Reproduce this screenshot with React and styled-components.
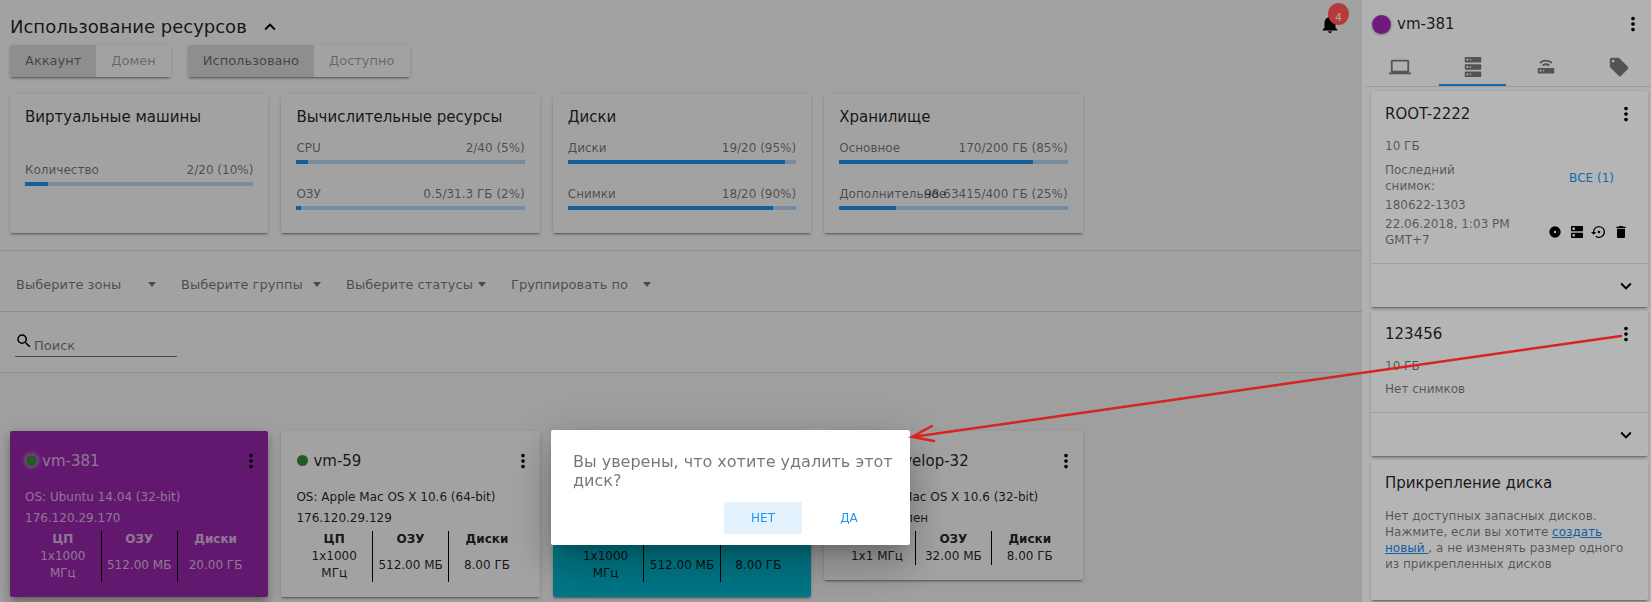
import React from "react";
import styled, { createGlobalStyle, css } from "styled-components";
import {
  MdDelete,
  MdDns,
  MdExpandLess,
  MdExpandMore,
  MdLaptop,
  MdLocalOffer,
  MdMoreVert,
  MdNotifications,
  MdSearch,
  MdSettingsBackupRestore,
} from "react-icons/md";

const GlobalStyle = createGlobalStyle`
  *, *::before, *::after { box-sizing: border-box; }
  body {
    margin: 0;
    background: #fafafa;
    color: rgba(0, 0, 0, 0.87);
    font: 12px/16px "DejaVu Sans", sans-serif;
  }
  h1, h2, h3, p { margin: 0; font-weight: 400; }
  button, input, select { font: inherit; color: inherit; }
`;

const shadow = "0 3px 1px -2px rgba(0,0,0,.2), 0 2px 2px 0 rgba(0,0,0,.14), 0 1px 5px 0 rgba(0,0,0,.12)";
const raised = "0 5px 5px -3px rgba(0,0,0,.2), 0 8px 10px 1px rgba(0,0,0,.14), 0 3px 14px 2px rgba(0,0,0,.12)";

const Page = styled.div`
  display: grid;
  grid-template-columns: minmax(0, 1fr) 289px;
  min-height: 100vh;
`;

const Main = styled.main`
  position: relative;
  min-width: 0;
`;

const DrawerShade = styled.div`
  position: absolute;
  inset: 0;
  background: rgba(0, 0, 0, 0.1);
`;

const Backdrop = styled.div`
  position: fixed;
  inset: 0;
  z-index: 2;
  background: rgba(0, 0, 0, 0.29);
`;

const Section = styled.section`
  background: #fff;
  border-bottom: 1px solid rgba(0, 0, 0, 0.12);
`;

const Usage = styled(Section)`
  padding: 14px 8px 17px 10px;
`;

const UsageHeader = styled.header`
  display: flex;
  align-items: center;
  height: 26px;
  gap: 12px;
  padding-right: 13px;
`;

const PageTitle = styled.h1`
  font-size: 18px;
  line-height: 26px;
`;

const IconButton = styled.button`
  display: inline-flex;
  align-items: center;
  justify-content: center;
  flex: none;
  width: ${(p) => p.$size || 22}px;
  height: ${(p) => p.$size || 22}px;
  padding: 0;
  border: 0;
  background: none;
  color: #000;
  font-size: ${(p) => p.$size || 22}px;
`;

const Bell = styled.div`
  position: relative;
  z-index: 1;
  display: flex;
  margin: 0 0 6px auto;
`;

const Badge = styled.span`
  position: absolute;
  top: -10px;
  right: -8px;
  width: 21px;
  height: 22px;
  border-radius: 50%;
  background: #ff5252;
  color: rgba(255, 255, 255, 0.87);
  font-size: 11px;
  line-height: 29px;
  text-align: center;
`;

const Toggles = styled.div`
  display: flex;
  gap: 17px;
  margin: 5px 0 17px;
`;

const ToggleGroup = styled.div`
  display: flex;
  border-radius: 2px;
  overflow: hidden;
  box-shadow: ${shadow};
`;

const Toggle = styled.button`
  height: 32px;
  padding: 0 15px;
  border: 0;
  font-size: 13px;
  background: ${(p) => (p.$on ? "#e0e0e0" : "#fff")};
  color: ${(p) => (p.$on ? "rgba(0,0,0,.54)" : "rgba(0,0,0,.38)")};
`;

const CardGrid = styled.div`
  display: grid;
  grid-template-columns: repeat(auto-fill, minmax(250px, 1fr));
  align-items: start;
  gap: 13px;
`;

const Card = styled.article`
  border-radius: 2px;
  background: #fff;
  box-shadow: ${shadow};
`;

const UsageCard = styled(Card)`
  display: flex;
  flex-direction: column;
  height: 139px;
  padding: 13px 15px 23px;
`;

const CardTitle = styled.h2`
  flex: 1;
  font-size: 15px;
  line-height: 20px;
`;

const Meters = styled.div`
  display: flex;
  flex: 5;
  flex-direction: column;
  justify-content: ${(p) => (p.$single ? "center" : "space-between")};
  padding-top: ${(p) => (p.$single ? 11 : 13)}px;
`;

const Meter = styled.div`
  color: rgba(0, 0, 0, 0.54);
`;

const MeterRow = styled.div`
  display: flex;
  justify-content: space-between;
  margin-bottom: 4px;
  line-height: 16px;
  white-space: nowrap;

  > span:first-child { min-width: 0; }
  > span:last-child { flex: none; }
`;

const Track = styled.div`
  height: 4px;
  background: #bbdefb;
`;

const Fill = styled.div`
  height: 4px;
  background: #2196f3;
`;

const Filters = styled(Section)`
  display: flex;
  gap: 25px;
  padding: 20px 16px;
`;

const SelectBox = styled.div`
  position: relative;
  width: 140px;
  height: 20px;
  color: rgba(0, 0, 0, 0.54);

  svg {
    position: absolute;
    top: 11px;
    right: 0;
    pointer-events: none;
  }
`;

const Select = styled.select`
  width: 100%;
  height: 28px;
  padding: 0;
  border: 0;
  appearance: none;
  background: none;
  font-size: 13px;
`;

const SearchSection = styled(Section)`
  padding: 20px 15px 16px;
`;

const SearchField = styled.label`
  display: flex;
  width: 162px;
  height: 25px;
  margin-bottom: -1px;
  border-bottom: 1px solid rgba(0, 0, 0, 0.54);
  color: #000;
`;

const SearchInput = styled.input`
  min-width: 0;
  flex: 1;
  height: 24px;
  padding: 2px 0 0 1px;
  border: 0;
  outline: 0;
  background: none;
  font-size: 13px;

  &::placeholder { color: rgba(0, 0, 0, 0.54); opacity: 1; }
`;

const VmList = styled.section`
  padding: 58px 8px 5px 10px;
`;

const VmCard = styled(Card)`
  padding: 17px 15px 15px;
  background: ${(p) => p.$bg || "#fff"};
  ${(p) =>
    p.$selected &&
    css`
      color: rgba(255, 255, 255, 0.7);
      box-shadow: ${raised};
    `}
`;

const VmHead = styled.header`
  display: flex;
  align-items: center;
  gap: 5px;
  height: 25px;
  margin-right: -9px;
`;

const Status = styled.span`
  width: 11px;
  height: 11px;
  margin-left: 1px;
  border-radius: 50%;
  background: #388e3c;
  box-shadow: ${(p) => (p.$glow ? "0 0 5px 1px rgba(255,255,255,.6)" : "none")};
`;

const VmLine = styled.p`
  margin-top: ${(p) => p.$gap || 5}px;
  line-height: 16px;
  white-space: nowrap;
`;

const Specs = styled.table`
  width: 100%;
  margin-top: 5px;
  table-layout: fixed;
  border-collapse: collapse;
  line-height: 17px;
  text-align: center;

  th, td { padding: 0; }
  th + th, td + td { border-left: 1px solid #000; }
  td:first-child { padding: 0 10px; }
  th { font-weight: 700; }
`;

const Narrow = styled(Specs)`
  td:first-child { padding: 0; }
`;

const Drawer = styled.aside`
  display: flex;
  flex-direction: column;
  min-width: 0;
  padding: 0 0 2px 4px;
  background: #fafafa;
`;

const DrawerHead = styled.header`
  display: flex;
  align-items: center;
  gap: 6px;
  height: 48px;
  padding: 0 7px 0 6px;
`;

const ColorDot = styled.span`
  width: 19px;
  height: 19px;
  border-radius: 50%;
  background: #9c27b0;
  box-shadow: 0 1px 3px rgba(0, 0, 0, 0.3);
`;

const Tabs = styled.nav`
  display: flex;
  gap: 6px;
  height: 39px;
  border-bottom: 1px solid rgba(0, 0, 0, 0.12);
`;

const Tab = styled.button`
  display: flex;
  flex: 1;
  align-items: center;
  justify-content: center;
  padding: 2px 0 0 2px;
  border: 0;
  border-bottom: 2px solid ${(p) => (p.$active ? "#2196f3" : "transparent")};
  background: none;
  color: #757575;
  font-size: 22px;
`;

const DrawerCards = styled.div`
  display: grid;
  gap: 4px;
  padding: 4px 3px 0 5px;
`;

const DiskBody = styled.div`
  padding: 13px 14px 15px;
  color: rgba(0, 0, 0, 0.54);
`;

const DiskHead = styled.header`
  display: flex;
  align-items: center;
  height: 20px;
  margin-right: -3px;
  margin-bottom: 14px;
  color: rgba(0, 0, 0, 0.87);
`;

const DiskFoot = styled.footer`
  display: flex;
  align-items: center;
  justify-content: flex-end;
  height: 44px;
  padding-right: 11px;
  border-top: 1px solid rgba(0, 0, 0, 0.12);
`;

const Snapshot = styled.div`
  display: flex;
  align-items: center;
  justify-content: space-between;
  margin-top: 8px;
`;

const SnapshotLabel = styled.p`
  width: 84px;
`;

const SnapshotName = styled.p`
  margin: 3px 0;
`;

const SnapshotTime = styled.div`
  display: flex;
  align-items: center;
  justify-content: space-between;

  p { width: 136px; }
`;

const Actions = styled.div`
  display: flex;
  align-items: center;
  gap: 6px;
  padding-right: 5px;
`;

const FlatButton = styled.button`
  height: 32px;
  padding: 0 20px;
  border: 0;
  border-radius: 2px;
  background: ${(p) => (p.$focused ? "#e3f2fd" : "none")};
  color: #2196f3;
`;

const AttachCard = styled(Card)`
  padding: 13px 14px 28px;
  color: rgba(0, 0, 0, 0.54);

  h2 { margin-bottom: 15px; color: rgba(0, 0, 0, 0.87); }
  a { color: #1b87e6; }
`;

const Overlay = styled.div`
  position: fixed;
  inset: 0;
  z-index: 3;
  pointer-events: none;
`;

const Dialog = styled.div`
  position: absolute;
  top: 430px;
  left: 551px;
  width: 359px;
  padding: 22px 12px 11px 22px;
  border-radius: 2px;
  background: #fff;
  box-shadow: 0 11px 15px -7px rgba(0,0,0,.2), 0 24px 38px 3px rgba(0,0,0,.14), 0 9px 46px 8px rgba(0,0,0,.12);
  pointer-events: auto;
`;

const Question = styled.p`
  color: rgba(0, 0, 0, 0.54);
  font-size: 16px;
  line-height: 19px;
`;

const DialogActions = styled.div`
  display: flex;
  justify-content: flex-end;
  gap: 8px;
  margin-top: 12px;
  padding-right: 10px;

  button { width: 78px; }
`;

const Pointer = styled.svg`
  position: absolute;
  inset: 0;
  overflow: visible;
`;

const svgProps = { width: "1em", height: "1em", viewBox: "0 0 24 24", fill: "currentColor" };

const ServerIcon = () => (
  <svg {...svgProps}>
    <path d="M4,1H20A1,1 0 0,1 21,2V6A1,1 0 0,1 20,7H4A1,1 0 0,1 3,6V2A1,1 0 0,1 4,1M4,9H20A1,1 0 0,1 21,10V14A1,1 0 0,1 20,15H4A1,1 0 0,1 3,14V10A1,1 0 0,1 4,9M4,17H20A1,1 0 0,1 21,18V22A1,1 0 0,1 20,23H4A1,1 0 0,1 3,22V18A1,1 0 0,1 4,17M9,5H10V3H9V5M9,13H10V11H9V13M9,21H10V19H9V21M5,3V5H7V3H5M5,11V13H7V11H5M5,19V21H7V19H5Z" />
  </svg>
);

const RouterIcon = () => (
  <svg {...svgProps}>
    <path d="M4,13H20A1,1 0 0,1 21,14V18A1,1 0 0,1 20,19H4A1,1 0 0,1 3,18V14A1,1 0 0,1 4,13M9,17H10V15H9V17M5,15V17H7V15H5M19,6.93L17.6,8.34C16.15,6.89 14.15,6 11.93,6C9.72,6 7.72,6.89 6.27,8.34L4.87,6.93C6.68,5.12 9.18,4 11.93,4C14.69,4 17.19,5.12 19,6.93M16.17,9.76L14.77,11.17C14.04,10.45 13.04,10 11.93,10C10.82,10 9.82,10.45 9.1,11.17L7.7,9.76C8.78,8.67 10.28,8 11.93,8C13.58,8 15.08,8.67 16.17,9.76Z" />
  </svg>
);

const DiscIcon = () => (
  <svg {...svgProps}>
    <path fillRule="evenodd" d="M12 3.5a8.5 8.5 0 1 0 0 17a8.5 8.5 0 1 0 0-17M12 10.2a1.8 1.8 0 1 1 0 3.6a1.8 1.8 0 1 1 0-3.6" />
  </svg>
);

const Caret = () => (
  <svg width="8" height="5" viewBox="0 0 8 5" fill="currentColor">
    <path d="M0 0h8L4 5z" />
  </svg>
);

const usage = [
  { title: "Виртуальные машины", rows: [["Количество", "2/20 (10%)", 10]] },
  { title: "Вычислительные ресурсы", rows: [["CPU", "2/40 (5%)", 5], ["ОЗУ", "0.5/31.3 ГБ (2%)", 2]] },
  { title: "Диски", rows: [["Диски", "19/20 (95%)", 95], ["Снимки", "18/20 (90%)", 90]] },
  { title: "Хранилище", rows: [["Основное", "170/200 ГБ (85%)", 85], ["Дополнительное", "98.63415/400 ГБ (25%)", 25]] },
];

const filters = ["Выберите зоны", "Выберите группы", "Выберите статусы", "Группировать по"];

const machines = [
  { name: "vm-381", os: "Ubuntu 14.04 (32-bit)", ip: "176.120.29.170", cpu: "1x1000 МГц", ram: "512.00 МБ", disk: "20.00 ГБ", bg: "#9c27b0", selected: true },
  { name: "vm-59", os: "Apple Mac OS X 10.6 (64-bit)", ip: "176.120.29.129", cpu: "1x1000 МГц", ram: "512.00 МБ", disk: "8.00 ГБ" },
  { name: "vm-58", os: "Ubuntu 14.04 (32-bit)", ip: "176.120.29.128", cpu: "1x1000 МГц", ram: "512.00 МБ", disk: "8.00 ГБ", bg: "#00bcd4" },
  { name: "lab-develop-32", os: "Apple Mac OS X 10.6 (32-bit)", ip: "Не определен", cpu: "1x1 МГц", ram: "32.00 МБ", disk: "8.00 ГБ", narrow: true },
];

function MenuButton() {
  return (
    <IconButton aria-label="Меню">
      <MdMoreVert />
    </IconButton>
  );
}

function Machine({ vm }) {
  const Table = vm.narrow ? Narrow : Specs;
  return (
    <VmCard $bg={vm.bg} $selected={vm.selected}>
      <VmHead>
        <Status $glow={vm.selected} />
        <CardTitle>{vm.name}</CardTitle>
        <MenuButton />
      </VmHead>
      <VmLine $gap={16}>OS: {vm.os}</VmLine>
      <VmLine>{vm.ip}</VmLine>
      <Table>
        <thead>
          <tr>
            <th>ЦП</th>
            <th>ОЗУ</th>
            <th>Диски</th>
          </tr>
        </thead>
        <tbody>
          <tr>
            <td>{vm.cpu}</td>
            <td>{vm.ram}</td>
            <td>{vm.disk}</td>
          </tr>
        </tbody>
      </Table>
    </VmCard>
  );
}

function DiskFooter() {
  return (
    <DiskFoot>
      <IconButton aria-label="Развернуть">
        <MdExpandMore />
      </IconButton>
    </DiskFoot>
  );
}

export default function App() {
  return (
    <>
      <GlobalStyle />
      <Page>
        <Main>
          <Usage>
            <UsageHeader>
              <PageTitle>Использование ресурсов</PageTitle>
              <IconButton aria-label="Свернуть">
                <MdExpandLess />
              </IconButton>
              <Bell>
                <IconButton aria-label="Уведомления">
                  <MdNotifications />
                </IconButton>
                <Badge>4</Badge>
              </Bell>
            </UsageHeader>
            <Toggles>
              <ToggleGroup>
                <Toggle $on>Аккаунт</Toggle>
                <Toggle>Домен</Toggle>
              </ToggleGroup>
              <ToggleGroup>
                <Toggle $on>Использовано</Toggle>
                <Toggle>Доступно</Toggle>
              </ToggleGroup>
            </Toggles>
            <CardGrid>
              {usage.map((card) => (
                <UsageCard key={card.title}>
                  <CardTitle>{card.title}</CardTitle>
                  <Meters $single={card.rows.length === 1}>
                    {card.rows.map(([label, value, percent]) => (
                      <Meter key={label}>
                        <MeterRow>
                          <span>{label}</span>
                          <span>{value}</span>
                        </MeterRow>
                        <Track>
                          <Fill style={{ width: `${percent}%` }} />
                        </Track>
                      </Meter>
                    ))}
                  </Meters>
                </UsageCard>
              ))}
            </CardGrid>
          </Usage>
          <Filters>
            {filters.map((label) => (
              <SelectBox key={label}>
                <Select aria-label={label}>
                  <option>{label}</option>
                </Select>
                <Caret />
              </SelectBox>
            ))}
          </Filters>
          <SearchSection>
            <SearchField>
              <MdSearch size={18} />
              <SearchInput placeholder="Поиск" aria-label="Поиск" />
            </SearchField>
          </SearchSection>
          <VmList>
            <CardGrid>
              {machines.map((vm) => (
                <Machine key={vm.name} vm={vm} />
              ))}
            </CardGrid>
          </VmList>
          <DrawerShade />
        </Main>

        <Drawer>
          <DrawerHead>
            <ColorDot />
            <CardTitle>vm-381</CardTitle>
            <MenuButton />
          </DrawerHead>
          <Tabs>
            <Tab aria-label="Машина"><MdLaptop /></Tab>
            <Tab $active aria-label="Диски"><ServerIcon /></Tab>
            <Tab aria-label="Сеть"><RouterIcon /></Tab>
            <Tab aria-label="Теги"><MdLocalOffer /></Tab>
          </Tabs>
          <DrawerCards>
            <Card>
              <DiskBody>
                <DiskHead>
                  <CardTitle>ROOT-2222</CardTitle>
                  <MenuButton />
                </DiskHead>
                <p>10 ГБ</p>
                <Snapshot>
                  <SnapshotLabel>Последний снимок:</SnapshotLabel>
                  <FlatButton>ВСЕ (1)</FlatButton>
                </Snapshot>
                <SnapshotName>180622-1303</SnapshotName>
                <SnapshotTime>
                  <p>22.06.2018, 1:03 PM GMT+7</p>
                  <Actions>
                    <IconButton $size={16} aria-label="Шаблон"><DiscIcon /></IconButton>
                    <IconButton $size={16} aria-label="Том"><MdDns /></IconButton>
                    <IconButton $size={16} aria-label="Восстановить"><MdSettingsBackupRestore /></IconButton>
                    <IconButton $size={16} aria-label="Удалить"><MdDelete /></IconButton>
                  </Actions>
                </SnapshotTime>
              </DiskBody>
              <DiskFooter />
            </Card>
            <Card>
              <DiskBody>
                <DiskHead>
                  <CardTitle>123456</CardTitle>
                  <MenuButton />
                </DiskHead>
                <p>10 ГБ</p>
                <VmLine $gap={7}>Нет снимков</VmLine>
              </DiskBody>
              <DiskFooter />
            </Card>
            <AttachCard>
              <CardTitle>Прикрепление диска</CardTitle>
              <p>
                Нет доступных запасных дисков. Нажмите, если вы хотите{" "}
                <a href="#create">создать новый&nbsp;</a>, а не изменять размер одного из прикрепленных дисков
              </p>
            </AttachCard>
          </DrawerCards>
        </Drawer>
      </Page>
      <Backdrop />
      <Overlay>
        <Dialog role="dialog" aria-modal="true">
          <Question>Вы уверены, что хотите удалить этот диск?</Question>
          <DialogActions>
            <FlatButton $focused>НЕТ</FlatButton>
            <FlatButton>ДА</FlatButton>
          </DialogActions>
        </Dialog>
        <Pointer width="100%" height="100%" fill="none" stroke="#d92323" strokeWidth="2.5" strokeLinecap="round">
          <path d="M1621 336L912 437M932 426L912 437L934 441" />
        </Pointer>
      </Overlay>
    </>
  );
}
